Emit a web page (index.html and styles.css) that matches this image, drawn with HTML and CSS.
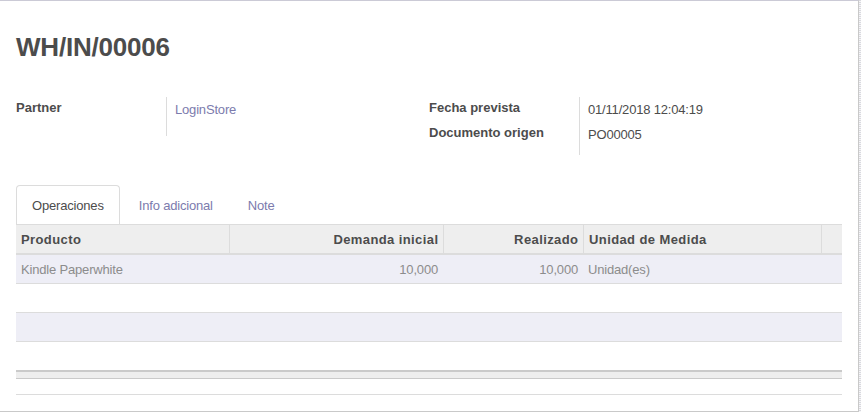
FILE: index.html
```html
<!DOCTYPE html>
<html lang="es">
<head>
<meta charset="utf-8">
<title>WH/IN/00006</title>
<link rel="stylesheet" href="styles.css">
</head>
<body>
<div class="page">
  <div class="sheet">
    <h1 class="title">WH/IN/00006</h1>
    <div class="groups">
      <div class="group group-left">
        <div class="labels">
          <div class="label">Partner</div>
        </div>
        <div class="values">
          <a class="value link">LoginStore</a>
        </div>
      </div>
      <div class="group group-right">
        <div class="labels">
          <div class="label">Fecha prevista</div>
          <div class="label">Documento origen</div>
        </div>
        <div class="values">
          <div class="value">01/11/2018 12:04:19</div>
          <div class="value">PO00005</div>
        </div>
      </div>
    </div>
    <div class="tabs">
      <a class="tab active">Operaciones</a>
      <a class="tab">Info adicional</a>
      <a class="tab">Note</a>
    </div>
    <div class="list">
      <div class="row head">
        <div class="cell">Producto</div>
        <div class="cell num sep">Demanda inicial</div>
        <div class="cell num sep">Realizado</div>
        <div class="cell sep">Unidad de Medida</div>
        <div class="cell sep"></div>
      </div>
      <div class="row data odd">
        <div class="cell">Kindle Paperwhite</div>
        <div class="cell num">10,000</div>
        <div class="cell num">10,000</div>
        <div class="cell">Unidad(es)</div>
        <div class="cell"></div>
      </div>
      <div class="row data"><div class="cell"></div></div>
      <div class="row data odd"><div class="cell"></div></div>
      <div class="row data last"><div class="cell"></div></div>
      <div class="foot"></div>
    </div>
    <div class="after"></div>
  </div>
</div>
</body>
</html>
```

FILE: styles.css
```css
html, body {
  margin: 0;
  padding: 0;
}
body {
  width: 861px;
  height: 412px;
  overflow: hidden;
  font-family: "Liberation Sans", Arial, sans-serif;
  font-size: 13px;
  letter-spacing: -0.18px;
  color: #4c4c4c;
  background: repeating-linear-gradient(to bottom, #d9d9de 0 1px, #f6f6f8 1px 2px);
}
.page {
  display: flex;
}
.sheet {
  box-sizing: border-box;
  width: 859px;
  height: 412px;
  background: #fff;
  border-top: 1px solid #cbcad6;
  border-right: 1px solid #c9c9c9;
  border-bottom: 1px solid #c9c9c9;
  padding: 31px 16px 0 16px;
}
.title {
  margin: 0;
  font-size: 26px;
  line-height: 31px;
  font-weight: bold;
  letter-spacing: -0.2px;
  color: #4c4c4c;
}
.groups {
  display: flex;
  margin-top: 34px;
  height: 58px;
}
.group {
  display: flex;
  width: 413px;
  align-items: flex-start;
}
.labels {
  width: 150px;
  margin-top: -2px;
}
.label {
  font-weight: bold;
  letter-spacing: 0;
  line-height: 25px;
  height: 25px;
}
.values {
  border-left: 1px solid #dcdcdc;
  padding-left: 8px;
  flex: 1;
}
.group-left .values {
  height: 39px;
}
.group-right .values {
  height: 58px;
}
.value {
  display: block;
  line-height: 25px;
  height: 25px;
  color: #4c4c4c;
}
.link {
  color: #7c7bad;
}
.tabs {
  display: flex;
  margin-top: 30px;
  border-bottom: 1px solid #dcdcdc;
  width: 826px;
}
.tab {
  display: block;
  padding: 10px 15px 8px 15px;
  line-height: 20px;
  margin-right: 3px;
  border: 1px solid transparent;
  border-bottom: 0;
  border-radius: 4px 4px 0 0;
  color: #7c7bad;
}
.tab.active {
  border-color: #dcdcdc;
  color: #4c4c4c;
  background: #fff;
}
.list {
  width: 826px;
}
.row {
  display: grid;
  grid-template-columns: 213px 214px 140px 238px 21px;
}
.cell {
  box-sizing: border-box;
  padding: 6px 5px 4px 5px;
  line-height: 18px;
  height: 28px;
  white-space: nowrap;
}
.num {
  text-align: right;
}
.head {
  background: #eeeeee;
  border-bottom: 2px solid #dcdcdc;
}
.head .cell {
  font-weight: bold;
  letter-spacing: 0.4px;
  color: #4c4c4c;
}
.head .num {
  padding-right: 4.6px;
}
.head .sep {
  border-left: 1px solid #dcdcdc;
}
.data {
  border-bottom: 1px solid #dcdcdc;
  color: #8c8c8c;
}
.data.odd {
  background: #eeeef6;
}
.data.last {
  border-bottom: 0;
}
.foot {
  height: 6px;
  background: #eeeeee;
  border-top: 2px solid #cacaca;
  border-bottom: 1px solid #cacaca;
}
.after {
  width: 826px;
  margin-top: 15px;
  border-top: 1px solid #dcdcdc;
}
```
